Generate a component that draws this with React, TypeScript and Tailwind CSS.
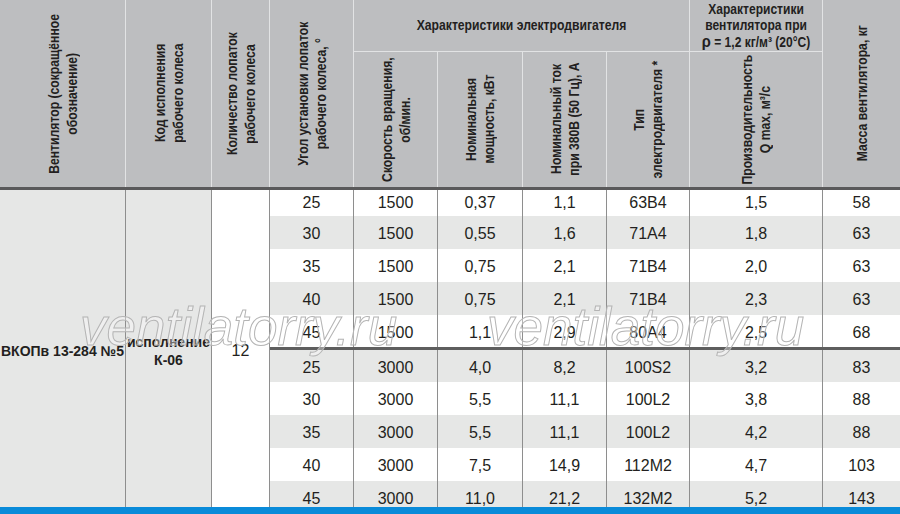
import React from "react";

const F = "font-['Liberation_Sans_Narrow','Liberation_Sans',Arial,sans-serif]";

const rows: string[][] = [
  ["25", "1500", "0,37", "1,1", "63B4", "1,5", "58"],
  ["30", "1500", "0,55", "1,6", "71A4", "1,8", "63"],
  ["35", "1500", "0,75", "2,1", "71B4", "2,0", "63"],
  ["40", "1500", "0,75", "2,1", "71B4", "2,3", "63"],
  ["45", "1500", "1,1", "2,9", "80A4", "2,5", "68"],
  ["25", "3000", "4,0", "8,2", "100S2", "3,2", "83"],
  ["30", "3000", "5,5", "11,1", "100L2", "3,8", "88"],
  ["35", "3000", "5,5", "11,1", "100L2", "4,2", "88"],
  ["40", "3000", "7,5", "14,9", "112M2", "4,7", "103"],
  ["45", "3000", "11,0", "21,2", "132M2", "5,2", "143"],
];

const heights = ["h-[26px]", "h-[33px]", "h-[33px]", "h-[33px]", "h-[32px]", "h-[32px]", "h-[33px]", "h-[33px]", "h-[33px]", "h-[33px]"];

function VText({ children }: { children: React.ReactNode }) {
  return (
    <div className="[writing-mode:vertical-rl] rotate-180 scale-y-[0.87] text-center text-[14px] leading-[18px] font-bold text-[#231f20] whitespace-nowrap">
      {children}
    </div>
  );
}

function HeadCell({ className = "", children }: { className?: string; children: React.ReactNode }) {
  return <div className={`flex items-center justify-center border-r border-[#e2e3e4] ${className}`}>{children}</div>;
}

export default function App() {
  return (
    <div className={`relative w-[900px] h-[514px] overflow-hidden bg-white ${F}`}>
      {/* Header */}
      <div className="grid h-[187px] grid-cols-[126px_86px_58px_84px_84px_85px_84px_83px_133px_77px] grid-rows-[52px_135px] bg-[#bdbec0]">
        <HeadCell className="row-span-2">
          <VText>Вентилятор (сокращённое<br />обозначение)</VText>
        </HeadCell>
        <HeadCell className="row-span-2">
          <VText>Код исполнения<br />рабочего колеса</VText>
        </HeadCell>
        <HeadCell className="row-span-2">
          <VText>Количество лопаток<br />рабочего колеса</VText>
        </HeadCell>
        <HeadCell className="row-span-2">
          <VText>Угол установки лопаток<br />рабочего колеса, °</VText>
        </HeadCell>
        <HeadCell className="col-span-4 border-b">
          <div className="scale-x-[0.87] text-[14px] font-bold text-[#231f20] whitespace-nowrap">Характеристики электродвигателя</div>
        </HeadCell>
        <HeadCell className="border-b">
          <div className="scale-x-[0.86] text-center text-[14px] leading-[16.5px] font-bold text-[#231f20] whitespace-nowrap">
            Характеристики
            <br />
            вентилятора при
            <br />
            <span className="text-[17px]">ρ</span> = 1,2 кг/м³ (20°С)
          </div>
        </HeadCell>
        <HeadCell className="row-span-2 border-r-0">
          <VText>Масса вентилятора, кг</VText>
        </HeadCell>
        <HeadCell>
          <VText>Скорость вращения,<br />об/мин.</VText>
        </HeadCell>
        <HeadCell>
          <VText>Номинальная<br />мощность, кВт</VText>
        </HeadCell>
        <HeadCell>
          <VText>Номинальный ток<br />при 380В (50 Гц), А</VText>
        </HeadCell>
        <HeadCell>
          <VText>Тип<br />электродвигателя *</VText>
        </HeadCell>
        <HeadCell>
          <VText>
            Производительность
            <br />Q max, м³/с
          </VText>
        </HeadCell>
      </div>
      <div className="h-[3px] bg-[#5a5a5b]" />

      {/* Body */}
      <div className="flex h-[317px] overflow-hidden">
        <div className="flex w-[126px] shrink-0 items-center justify-center border-r border-[#8e8e8e] bg-[#e6e7e6] pt-[5px]">
          <span className="whitespace-nowrap text-[14px] font-bold text-[#231f20]">ВКОПв 13-284 №5</span>
        </div>
        <div className="flex w-[86px] shrink-0 items-center justify-center border-r border-[#8e8e8e] bg-[#e6e7e6] pt-[5px]">
          <span className="text-center text-[14px] leading-[18px] font-bold text-[#231f20]">
            исполнение
            <br />
            К-06
          </span>
        </div>
        <div className="flex w-[58px] shrink-0 items-center justify-center border-r border-[#8e8e8e] bg-white pt-[5px]">
          <span className="text-[16px] text-[#231f20]">12</span>
        </div>
        <div className="flex w-[630px] shrink-0 flex-col">
          {rows.map((r, i) => (
            <React.Fragment key={i}>
              {i === 5 && <div className="h-[3px] shrink-0 bg-[#5e5e5e]" />}
              <div
                className={`grid shrink-0 grid-cols-[84px_84px_85px_84px_83px_133px_77px] ${heights[i]} ${
                  i % 2 === 0 ? "bg-white" : "bg-[#e6e7e6]"
                }`}
              >
                {r.map((c, j) => (
                  <div
                    key={j}
                    className={`flex items-center justify-center text-[16px] text-[#231f20] ${i === 0 ? "" : "pt-[3px]"} ${
                      j < 6 ? "border-r border-[#8e8e8e]" : ""
                    }`}
                  >
                    {c}
                  </div>
                ))}
              </div>
            </React.Fragment>
          ))}
        </div>
      </div>

      <div className="h-[7px] bg-[#0a8bd9]" />

      {/* Watermark */}
      <div className="pointer-events-none absolute left-0 top-[292px] flex h-[70px] w-[900px] font-['Liberation_Sans',Arial,sans-serif] text-[53px] italic leading-[70px] text-[rgba(255,255,255,0.35)] [-webkit-text-stroke:1px_#b4b4b4]">
        <span className="absolute left-[80px] top-0 whitespace-nowrap">ventilatorry.ru</span>
        <span className="absolute left-[487px] top-0 whitespace-nowrap">ventilatorry.ru</span>
      </div>
    </div>
  );
}
